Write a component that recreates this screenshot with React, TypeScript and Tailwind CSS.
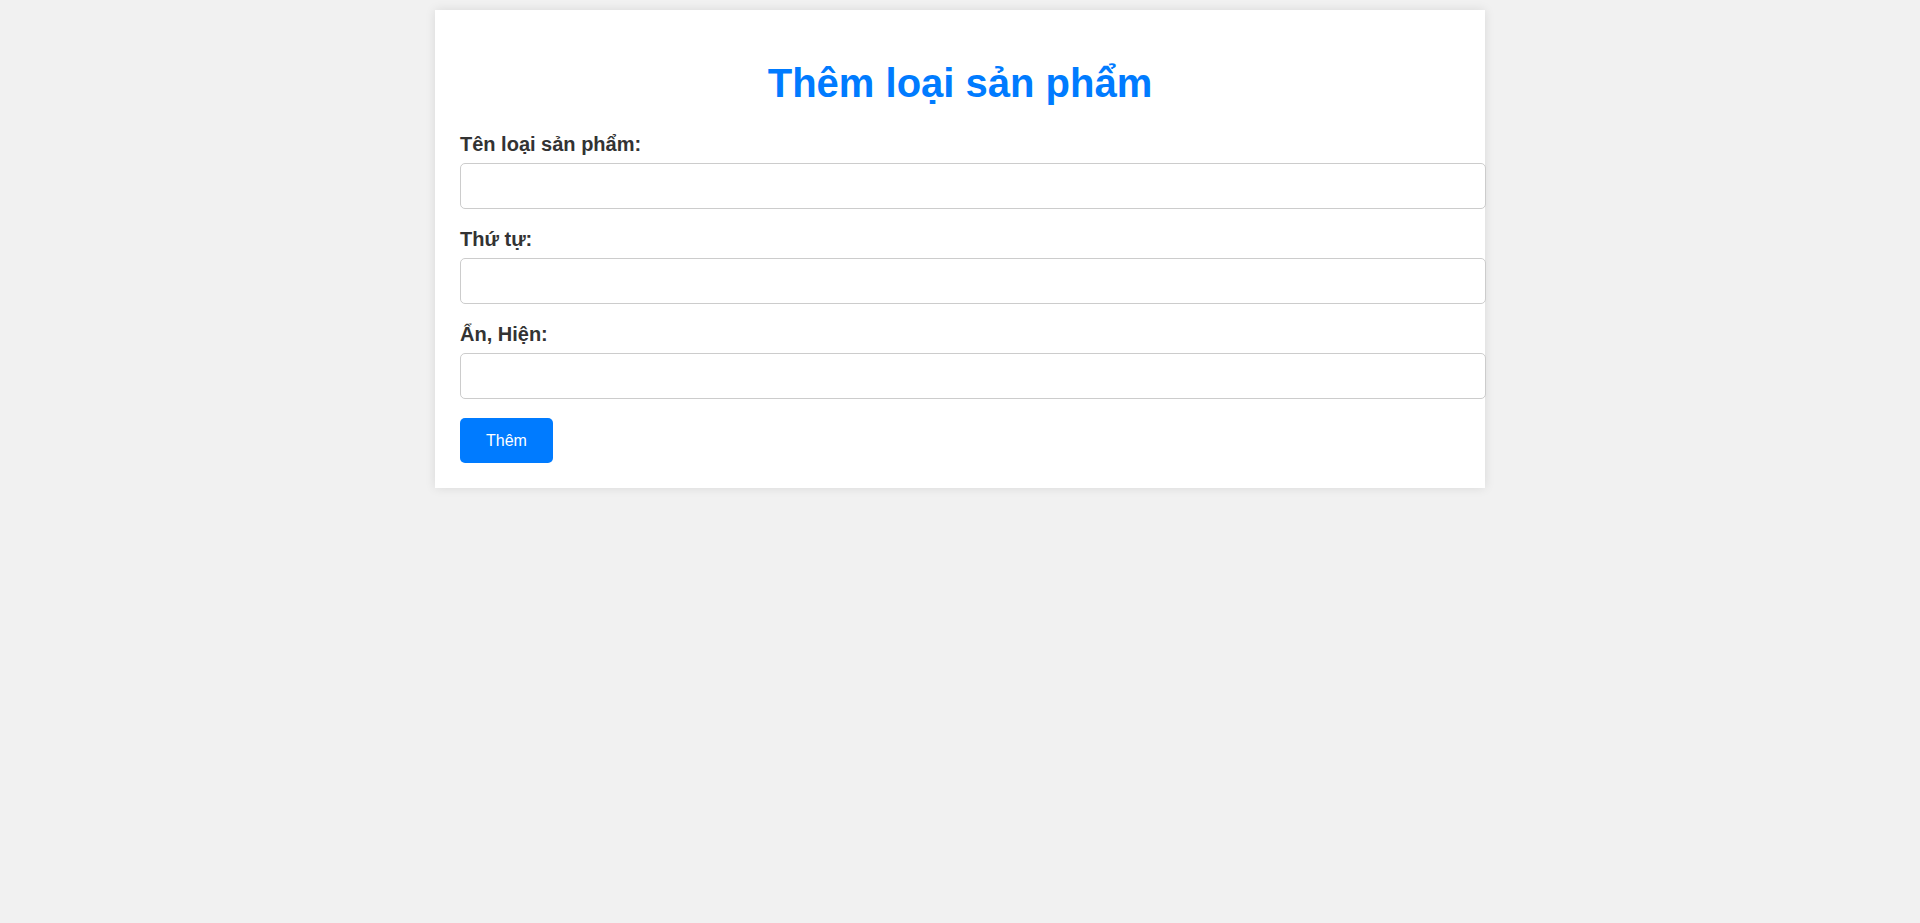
import React, { useState } from 'react';

const App: React.FC = () => {
  const [name, setName] = useState('');
  const [order, setOrder] = useState('');
  const [visible, setVisible] = useState('');

  const handleSubmit = (e: React.FormEvent) => {
    e.preventDefault();
  };

  return (
    <div className="min-h-screen bg-[#f1f1f1] pt-[10px] font-['Liberation_Sans',Arial,sans-serif]">
      <div className="box-content max-w-[1000px] mx-auto bg-white p-[25px] shadow-[0_0_10px_rgba(0,0,0,0.1)]">
        <h1 className="mt-[25px] mb-[27px] text-center text-[40px] leading-[46px] font-bold text-[#007bff]">
          Thêm loại sản phẩm
        </h1>
        <form onSubmit={handleSubmit} className="flex flex-col gap-[19px]">
          <div>
            <label className="block mb-[7px] text-[20px] leading-[23px] font-bold text-[#333]">Tên loại sản phẩm:</label>
            <input
              type="text"
              value={name}
              onChange={(e) => setName(e.target.value)}
              className="box-content block w-full h-[20px] px-3 py-3 border border-[#ccc] rounded-[5px] text-base outline-none"
            />
          </div>
          <div>
            <label className="block mb-[7px] text-[20px] leading-[23px] font-bold text-[#333]">Thứ tự:</label>
            <input
              type="text"
              value={order}
              onChange={(e) => setOrder(e.target.value)}
              className="box-content block w-full h-[20px] px-3 py-3 border border-[#ccc] rounded-[5px] text-base outline-none"
            />
          </div>
          <div>
            <label className="block mb-[7px] text-[20px] leading-[23px] font-bold text-[#333]">Ẩn, Hiện:</label>
            <input
              type="text"
              value={visible}
              onChange={(e) => setVisible(e.target.value)}
              className="box-content block w-full h-[20px] px-3 py-3 border border-[#ccc] rounded-[5px] text-base outline-none"
            />
          </div>
          <div>
            <button
              type="submit"
              className="w-[93px] h-[45px] rounded-[5px] bg-[#007bff] text-white text-base cursor-pointer"
            >
              Thêm
            </button>
          </div>
        </form>
      </div>
    </div>
  );
};

export default App;
